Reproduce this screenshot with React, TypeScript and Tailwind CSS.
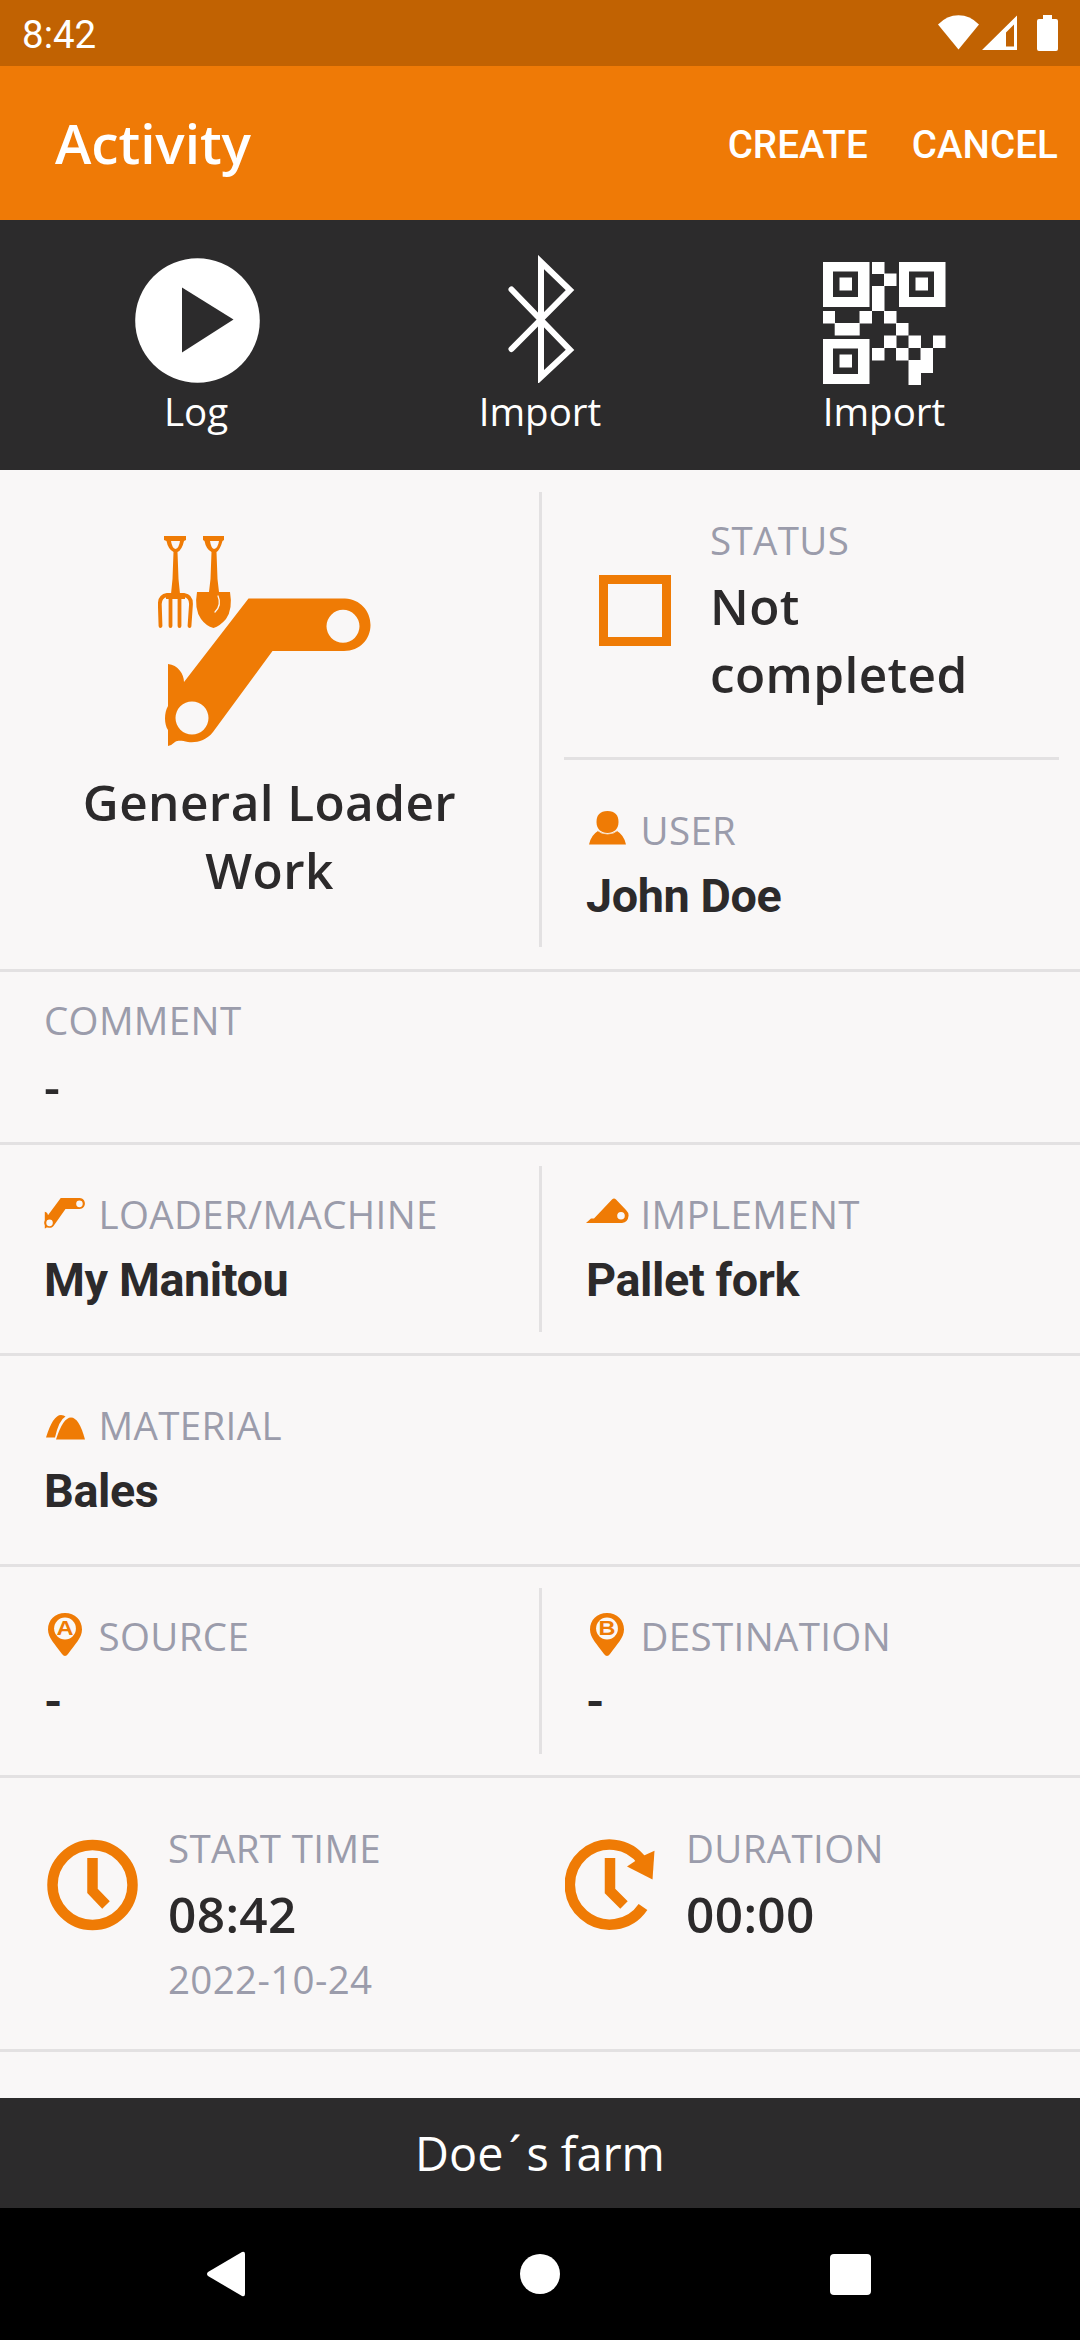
import type { ReactNode } from "react";

const ORANGE = "#ef7b05";

function Label({ children }: { children: ReactNode }) {
  return <div className="whitespace-nowrap text-[38.5px] leading-[52px] tracking-[0.35px] text-[#9b9cab]">{children}</div>;
}

function Value({ children }: { children: ReactNode }) {
  return <div className="text-[49.5px] font-semibold leading-[68px] tracking-[0.4px]">{children}</div>;
}

function Field({ icon, label, value }: { icon: ReactNode; label: string; value: string }) {
  return (
    <div>
      <div className="flex h-[52px] items-center">
        <div className="w-[54.5px]">{icon}</div>
        <Label>{label}</Label>
      </div>
      <div className="mt-[13px] font-[Roboto,sans-serif] text-[46.75px] font-bold leading-[54px] tracking-[-0.4px]">{value}</div>
    </div>
  );
}

function Divider() {
  return <div className="w-[3px] bg-[#e3e1e2]" />;
}

function LoaderArm() {
  return (
    <path
      fillRule="evenodd"
      d="M90.500 62.500H187C202 63 212.500 75 212.500 89C212.500 103 202 115 186 115H114.500L55 196C48 205 38 207 30 206C24 205 21 204 17 206Q14 209 10 210V194C6 188 6 177 10 170V128C20 129 26 138 26 146ZM185 73.800A16.500 16.500 0 1 0 185 106.800A16.500 16.500 0 1 0 185 73.800ZM34 165.500A16.500 16.500 0 1 0 34 198.500A16.500 16.500 0 1 0 34 165.500Z"
    />
  );
}

function GeneralWorkIcon() {
  return (
    <svg width="214" height="212" viewBox="0 0 214 212" fill={ORANGE} className="block">
      <LoaderArm />
      <path fillRule="evenodd" d="M6 0H28V4L26 5Q24 14 19.500 16L20.500 43L22 58H13L14.500 43L15.500 16Q10 13 8.500 5L6 4ZM13 5Q14 12 17.500 13Q21 12 22 5Z" />
      <path fillRule="evenodd" d="M45 0H66V4L64.500 5Q62 14 58.500 16L59.500 43L61 56H72Q75 73 68 83Q62 90 55.500 92Q48 90 43 83Q36 73 39 56H51L52.500 43L53.500 16Q48 13 46.500 5L45 4ZM52 5Q53 12 56 13Q60 12 61 5Z" />
      <path d="M60 60Q64 69 57 76" fill="none" stroke="#faf7f5" strokeWidth="1.300" strokeLinecap="round" />
      <path d="M2.500 90L1.800 68Q2 60 9 59H26Q33 60 33 68L31.500 90M12.500 60V90M21.500 60V90" fill="none" stroke={ORANGE} strokeWidth="3.800" strokeLinecap="round" />
      <path d="M8 58H27V63H8Z" />
    </svg>
  );
}

function Pin({ letter }: { letter: string }) {
  return (
    <svg width="34" height="43" viewBox="0 0 34 43" className="relative -top-[2px] ml-[4px] block">
      <path d="M17 0C7 0 0 7 0 16.500C0 25 7 31 14 41Q17 45 20 41C27 31 34 25 34 16.500C34 7 27 0 17 0Z" fill={ORANGE} />
      <circle cx="17" cy="15.500" r="10.900" fill="#faf8f6" />
      <text x="17" y="22" textAnchor="middle" textLength="17" lengthAdjust="spacingAndGlyphs" fontFamily="Liberation Sans, sans-serif" fontWeight="700" fontSize="20" fill={ORANGE}>
        {letter}
      </text>
    </svg>
  );
}

function Tool({ icon, label }: { icon: ReactNode; label: string }) {
  return (
    <div className="flex flex-col items-center">
      <div className="flex h-[165px] items-end">{icon}</div>
      <div className="text-[38.5px] leading-[52px] text-white">{label}</div>
    </div>
  );
}

function QrIcon() {
  const cells = [
    [49, 0, 12.5, 12], [61, 11.5, 12.5, 12.5], [49, 24, 12.5, 25], [0, 49, 12, 12.5], [36.5, 49, 12.5, 12.5],
    [11.7, 61, 25, 12.5], [61, 49, 12.5, 12.5], [73, 61, 12.5, 12.5], [61, 73.5, 12.5, 12.5], [85.5, 73.5, 12.5, 12.5],
    [110, 73.5, 12.5, 12.5], [49, 86, 12.5, 12.5], [73, 86, 12.5, 12.5], [97.5, 86, 12.5, 25], [85.5, 98, 12.5, 25],
  ];
  const finders = [[0, 0], [76, 0], [0, 77]];
  return (
    <svg width="123" height="123" viewBox="0 0 123 123" className="block">
      {cells.map(([x, y, w, h]) => (
        <rect key={`${x}-${y}`} x={x} y={y} width={w} height={h} fill="#fff" />
      ))}
      {finders.map(([x, y]) => (
        <g key={`${x}-${y}`}>
          <rect x={x} y={y} width="46.500" height="45" fill="#fff" />
          <rect x={x + 10} y={y + 9.5} width="25" height="25.500" fill="#2c2b2c" />
          <rect x={x + 16.5} y={y + 15.5} width="12.500" height="13" fill="#fff" />
        </g>
      ))}
    </svg>
  );
}

export default function App() {
  return (
    <div className="flex h-[2340px] w-[1080px] flex-col overflow-hidden bg-[#f9f7f7] font-['Open_Sans',sans-serif] text-[#2c2a2b]">
      <div className="flex h-[66px] shrink-0 items-start justify-between bg-[#c16202] pl-[22px] pr-[22px] text-white">
        <span className="mt-[12px] font-[Roboto,sans-serif] text-[38.5px] leading-[45px]">8:42</span>
        <svg width="120" height="36" viewBox="0 0 120 36" className="mt-[15px]" fill="#fff">
          <path d="M20.500 34.500L0 9.500Q9 .3 20.500 .3T41 9.500Z" />
          <path fillRule="evenodd" d="M79 .5V35H44ZM76 9.500L68 17.500V31.500H76Z" />
          <path d="M105 0h9v4h4q2 0 2 2v28q0 2-2 2h-17q-2 0-2-2V6q0-2 2-2h4Z" />
        </svg>
      </div>

      <header className="flex h-[154px] shrink-0 items-start justify-between bg-[#ef7a06] pl-[55px] pr-[22px] text-white">
        <h1 className="mt-[39px] text-[55px] font-semibold leading-[75px] tracking-[-0.1px]">Activity</h1>
        <nav className="mt-[56px] flex gap-[44px] font-[Roboto,sans-serif] text-[38.5px] font-medium leading-[45px] tracking-[0.1px]">
          <span>CREATE</span>
          <span>CANCEL</span>
        </nav>
      </header>

      <div className="grid h-[250px] shrink-0 grid-cols-3 bg-[#2c2b2c] px-6">
        <Tool
          label="Log"
          icon={
            <svg width="125" height="125" viewBox="0 0 125 125" className="relative -top-[2px] left-[1px]">
              <circle cx="62.500" cy="62.500" r="62.300" fill="#fff" />
              <path d="M47 29.500L98.500 61.500L47 94.500Z" fill="#2c2b2c" />
            </svg>
          }
        />
        <Tool
          label="Import"
          icon={
            <svg width="68" height="128" viewBox="0 0 68 128" className="relative -top-[2px] left-[2px]" fill="none" stroke="#fff" strokeWidth="6">
              <path d="M3.500 34.500L62 95L33 122V7L62 35L3.500 94" strokeLinecap="round" strokeMiterlimit="10" />
            </svg>
          }
        />
        <Tool label="Import" icon={<QrIcon />} />
      </div>

      <main className="flex min-h-0 flex-1 flex-col">
        <section className="flex h-[502px] shrink-0 border-b-[3px] border-[#e3e1e2]">
          <div className="flex w-[539px] flex-col items-center pt-[66px]">
            <div className="ml-[-10px]">
              <GeneralWorkIcon />
            </div>
            <div className="mt-[20px] w-[400px] text-center">
              <Value>General Loader Work</Value>
            </div>
          </div>
          <div className="flex py-[22px]">
            <Divider />
          </div>
          <div className="flex-1 pl-[22px] pr-[21px]">
            <div className="flex h-[290px] border-b-[3px] border-[#e3e1e2] pl-[35px] pt-[44px]">
              <div className="mt-[61px] h-[71px] w-[72px] border-[9.500px] border-[#ef7b05]" />
              <div className="ml-[39px] w-[300px]">
                <Label>STATUS</Label>
                <div className="mt-[6px]">
                  <Value>Not completed</Value>
                </div>
              </div>
            </div>
            <div className="pl-[22px] pt-[44px]">
              <Field
                label="USER"
                value="John Doe"
                icon={
                  <svg width="37" height="34" viewBox="0 0 37 34" fill={ORANGE} className="relative -top-[2px] ml-[3px] block">
                    <path d="M0 33.500Q2 24 9 20Q18.500 26 28 20Q35 24 37 33.500Z" />
                    <path d="M18.500 0C26 0 29.500 4 29.500 11C29.500 18 25 22 18.500 22S7.500 18 7.500 11C7.500 4 11 0 18.500 0Z" />
                    <path d="M8.500 19.500Q12 23 18.500 23T28.500 19.500" fill="none" stroke="#fbe3c8" strokeWidth="0.800" />
                  </svg>
                }
              />
            </div>
          </div>
        </section>

        <section className="h-[173px] shrink-0 border-b-[3px] border-[#e3e1e2] pl-[44px] pt-[22px]">
          <Label>COMMENT</Label>
          <div className="mt-[6px]">
            <Value>-</Value>
          </div>
        </section>

        <section className="flex h-[211px] shrink-0 border-b-[3px] border-[#e3e1e2]">
          <div className="w-[539px] pl-[44px] pt-[43px]">
            <Field
              label="LOADER/MACHINE"
              value="My Manitou"
              icon={
                <svg width="41" height="31" viewBox="6 62 207 150" preserveAspectRatio="none" fill={ORANGE} className="relative -top-[1px] block">
                  <LoaderArm />
                </svg>
              }
            />
          </div>
          <div className="flex py-[21px]">
            <Divider />
          </div>
          <div className="pl-[44px] pt-[43px]">
            <Field
              label="IMPLEMENT"
              value="Pallet fork"
              icon={
                <svg width="43" height="25" viewBox="0 0 43 25" fill={ORANGE} className="relative -top-[4px] block">
                  <path fillRule="evenodd" d="M0 25L5 20.500H8L26 1.500Q28 -.5 30 1.500L40 12Q43 15 42.500 18Q42 24 36 25ZM35 14A3.800 3.800 0 1 0 35 21.600A3.800 3.800 0 1 0 35 14Z" />
                </svg>
              }
            />
          </div>
        </section>

        <section className="h-[211px] shrink-0 border-b-[3px] border-[#e3e1e2] pl-[44px] pt-[43px]">
          <Field
            label="MATERIAL"
            value="Bales"
            icon={
              <svg width="39" height="25" viewBox="0 0 39 25" fill={ORANGE} className="relative top-[2px] ml-[2px] block">
                <path d="M0 22.500Q7 0 15 0Q18 0 19.500 1.500Q13 5 9 22.500Z" />
                <path d="M10 24.500Q17 2.500 25 2.500T39 24.500Z" />
              </svg>
            }
          />
        </section>

        <section className="flex h-[211px] shrink-0 border-b-[3px] border-[#e3e1e2]">
          <div className="w-[539px] pl-[44px] pt-[43px]">
            <Field label="SOURCE" value="-" icon={<Pin letter="A" />} />
          </div>
          <div className="flex py-[21px]">
            <Divider />
          </div>
          <div className="pl-[44px] pt-[43px]">
            <Field label="DESTINATION" value="-" icon={<Pin letter="B" />} />
          </div>
        </section>

        <section className="flex h-[274px] shrink-0 border-b-[3px] border-[#e3e1e2] pt-[44px]">
          <div className="flex w-[565px] pl-[47px]">
            <svg width="91" height="92" viewBox="0 0 91 92" fill="none" stroke={ORANGE} strokeWidth="10.500" className="mt-[17px]">
              <circle cx="45.500" cy="46" r="40" />
              <path d="M45.500 19V52L59 66" />
            </svg>
            <div className="ml-[30px]">
              <Label>START TIME</Label>
              <div className="mt-[6px]">
                <Value>08:42</Value>
              </div>
              <div className="mt-[5px]">
                <Label>2022-10-24</Label>
              </div>
            </div>
          </div>
          <div className="flex">
            <svg width="91" height="92" viewBox="0 0 91 92" fill="none" stroke={ORANGE} strokeWidth="10.500" className="mt-[17px]">
              <path d="M78 68A40 40 0 1 1 77.500 22.500" />
              <path d="M45 19V52L59 66" />
              <path d="M62 27.500L71 21.500L79 16.500L89.500 11.700L87.500 40.500Z" fill={ORANGE} stroke="none" />
            </svg>
            <div className="ml-[30px]">
              <Label>DURATION</Label>
              <div className="mt-[6px]">
                <Value>00:00</Value>
              </div>
            </div>
          </div>
        </section>
      </main>

      <div className="h-[110px] shrink-0 bg-[#2c2b2c] pt-[23px] text-center text-[46.75px] leading-[64px] text-white">
        Doe<span className="px-[5px]">´</span>s farm
      </div>

      <div className="flex h-[132px] shrink-0 items-center justify-between bg-black pl-[206px] pr-[209px]">
        <svg width="40" height="46" viewBox="0 0 40 46" fill="#fff">
          <path d="M36 1Q39 0 39 3V43Q39 46 36 45L2 25Q0 23 2 21Z" />
        </svg>
        <div className="ml-[4px] size-[40px] rounded-full bg-white" />
        <div className="size-[41px] rounded-[4px] bg-white" />
      </div>
    </div>
  );
}
